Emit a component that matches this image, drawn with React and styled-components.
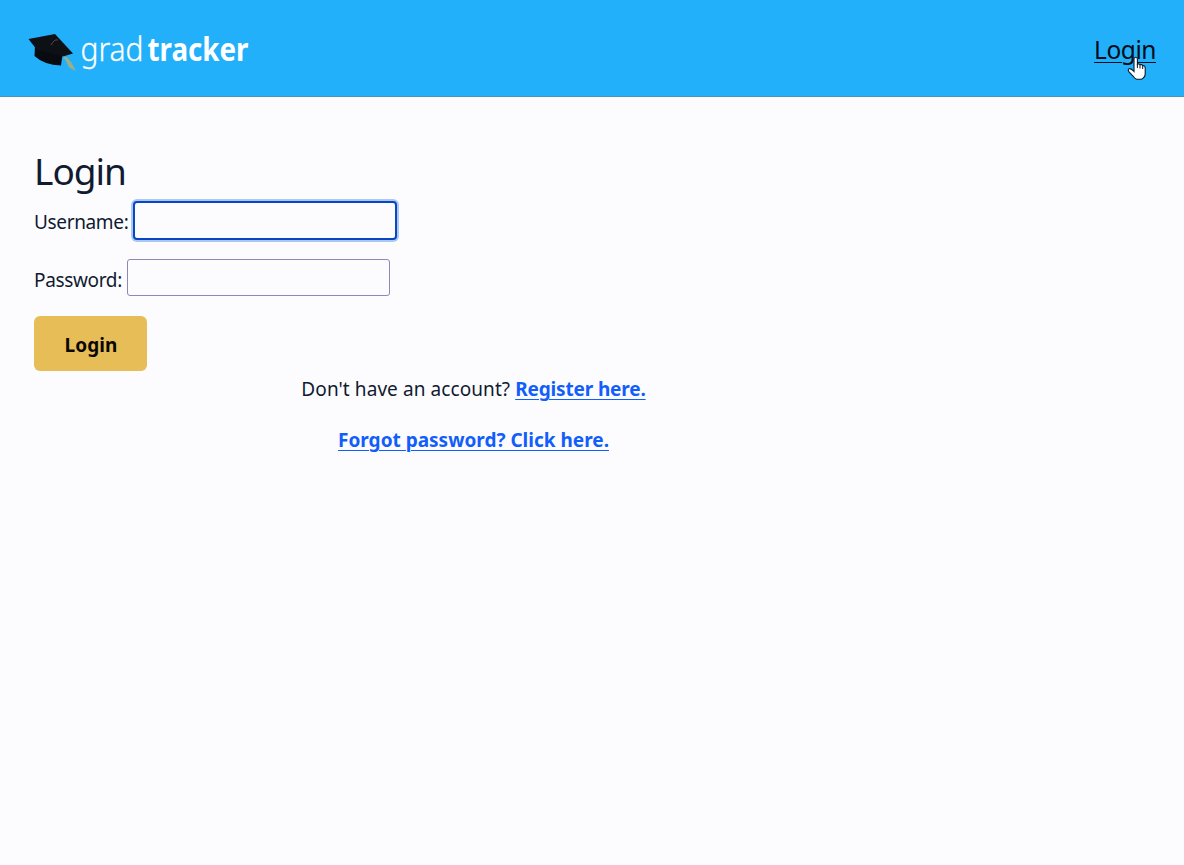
import React from "react";
import styled, { createGlobalStyle } from "styled-components";

const GlobalStyle = createGlobalStyle`
  * { box-sizing: border-box; }
  body {
    margin: 0;
    background: #fcfcff;
    color: #101a30;
    font-family: "Noto Sans", "Open Sans", sans-serif;
    font-size: 19px;
  }
`;

const Header = styled.header`
  display: flex;
  justify-content: space-between;
  align-items: flex-start;
  height: 97px;
  padding: 28px 28px 0;
  background: #22b0fb;
  border-bottom: 1px solid #4795bd;
`;

const LogoDrawing = styled.svg`
  display: block;
  width: 224px;
  height: 50px;
  overflow: visible;
  font-family: "Noto Sans", sans-serif;
  fill: #fff;
`;

const NavItem = styled.div`
  position: relative;
`;

const NavLink = styled.a`
  display: block;
  color: #000c18;
  font-size: 24.5px;
  line-height: 43px;
  letter-spacing: -0.45px;
  text-decoration: underline;
  text-decoration-thickness: 1px;
  text-underline-offset: 3px;
`;

const Pointer = styled.svg`
  position: absolute;
  left: 33px;
  top: 27px;
  width: 20px;
  height: 26px;
`;

const Main = styled.main`
  width: 913px;
  padding: 45px 0 0 34px;
`;

const Title = styled.h1`
  margin: 0 0 1px;
  font-size: 37px;
  font-weight: 400;
  line-height: 58px;
  letter-spacing: -1px;
`;

const Field = styled.div`
  display: flex;
  align-items: flex-start;
  height: ${(p) => p.$height}px;
`;

const Label = styled.label`
  width: ${(p) => p.$width}px;
  flex: none;
  line-height: 42px;
  letter-spacing: -0.35px;
  white-space: nowrap;
`;

const Input = styled.input`
  width: 263px;
  height: 37px;
  border: 1px solid #8f87b8;
  border-radius: 3px;
  background: #fcfcff;
  outline: none;
  ${(p) =>
    p.$focused &&
    `
    width: 264px;
    height: 39px;
    border: 2px solid #0a45c4;
    border-radius: 4px;
    box-shadow: 0 0 0 2px #a9c8f2;
  `}
`;

const Button = styled.button`
  display: block;
  width: 113px;
  height: 55px;
  padding: 2px 0 0 1px;
  border: 0;
  border-radius: 6px;
  background: #e6bd56;
  color: #0a0804;
  font: 700 19px "Noto Sans", sans-serif;
  letter-spacing: 0.1px;
`;

const Note = styled.p`
  margin: 0 0 15px;
  line-height: 36px;
  text-align: center;
`;

const Link = styled.a`
  color: #115efa;
  font-weight: 700;
  letter-spacing: ${(p) => p.$spacing || 0}px;
  text-decoration: underline;
  text-decoration-thickness: 1px;
  text-underline-offset: 3px;
`;

const Question = styled.span`
  letter-spacing: 0.08px;
`;

function Logo() {
  return (
    <LogoDrawing viewBox="28 28 224 50">
      <path d="M35 45 L34.5 56 Q44 65 61 65.5 L62.5 55 L50 49Z" fill="#080c10" />
      <path d="M28.5 39 L55 34 L73 53.5 L63 56.5 L37 50Z" fill="#0d1116" />
      <path d="M51 45 Q54 39 58 40" fill="none" stroke="#5a4a43" strokeWidth="1" />
      <path d="M63 56.5 L67 57.5 L71 62 L76 71 L69 67.5 L66 61Z" fill="#9bad8b" />
      <text x="80.5" y="60.5" fontSize="33" fontWeight="300" stroke="#fff" strokeWidth="0.3" textLength="63" lengthAdjust="spacingAndGlyphs">grad</text>
      <text x="147.5" y="61" fontSize="33" fontWeight="700" textLength="101" lengthAdjust="spacingAndGlyphs">tracker</text>
    </LogoDrawing>
  );
}

function HandPointer() {
  return (
    <Pointer viewBox="0 0 20 26">
      <path
        d="M7 14V4.2Q7 2.2 8.7 2.2T10.4 4.2V9.3Q12.3 8.3 13 9.8Q15 9 15.6 10.7Q18.2 10.4 18.2 13V18.5Q18.2 22.5 14.5 24.2H9.5Q7.5 23.5 6 21L2 16.8Q.5 14.5 2.1 13.8Q3.8 13 7 16.5Z"
        fill="#fff"
        stroke="#071a2b"
        strokeWidth="1.1"
      />
      <path d="M10.4 9V13M13 10V13.5M15.7 11V14" stroke="#071a2b" strokeWidth="1" />
    </Pointer>
  );
}

export default function App() {
  return (
    <>
      <GlobalStyle />
      <Header>
        <Logo />
        <NavItem>
          <NavLink>Login</NavLink>
          <HandPointer />
        </NavItem>
      </Header>
      <Main>
        <Title>Login</Title>
        <Field $height={58}>
          <Label $width={99}>Username:</Label>
          <Input $focused />
        </Field>
        <Field $height={57}>
          <Label $width={93}>Password:</Label>
          <Input type="password" />
        </Field>
        <Button>Login</Button>
        <Note>
          <Question>Don't have an account? </Question>
          <Link $spacing={-0.15}>Register here.</Link>
        </Note>
        <Note>
          <Link>Forgot password? Click here.</Link>
        </Note>
      </Main>
    </>
  );
}
